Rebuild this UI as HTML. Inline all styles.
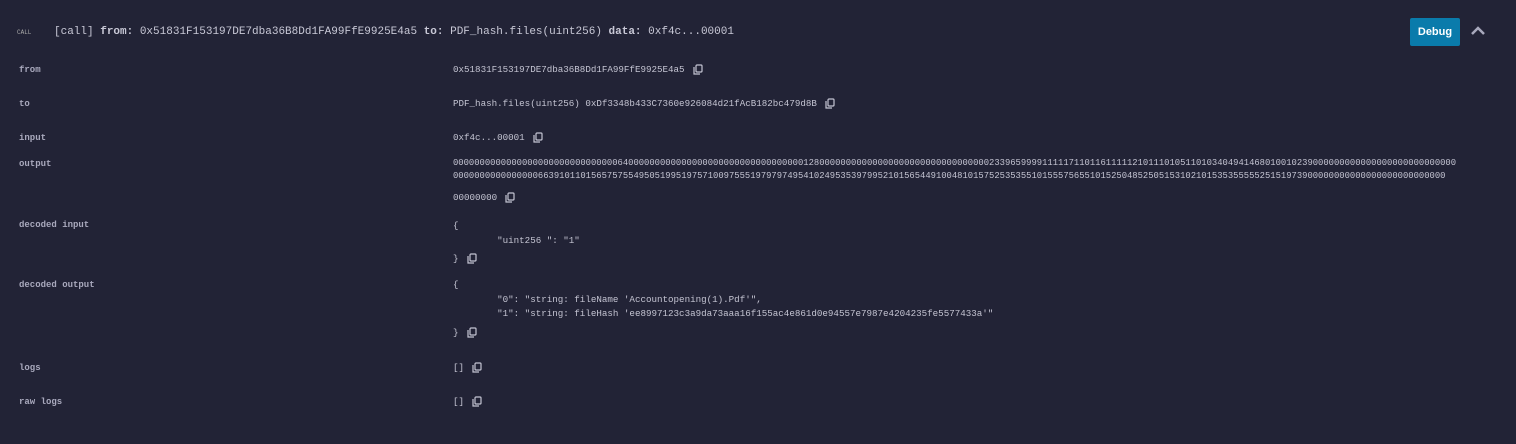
<!DOCTYPE html>
<html><head><meta charset="utf-8"><style>
body{margin:0;width:1516px;height:444px;background:#222336;overflow:hidden;font-family:"Liberation Mono",monospace;color:#c4c4d2;}
.a{position:absolute;white-space:pre;}
.l{position:absolute;left:19px;font-size:9px;font-weight:bold;color:#a9a9bd;}
.v{position:absolute;left:453px;font-size:9.2px;white-space:pre;line-height:13px;}
.c{display:inline-block;width:10px;height:11px;vertical-align:middle;margin-left:8px;}
</style></head><body>
<div class="a" style="left:17px;top:29px;font-size:6px;color:#aaa;">CALL</div>
<div class="a" style="left:54px;top:26px;font-size:11px;color:#c8c8d6;">[call] <b>from:</b> 0x51831F153197DE7dba36B8Dd1FA99FfE9925E4a5 <b>to:</b> PDF_hash.files(uint256) <b>data:</b> 0xf4c...00001</div>
<div class="a" style="left:1410px;top:18px;width:50px;height:28px;background:#0a7bab;border-radius:2px;color:#fff;font-family:'Liberation Sans',sans-serif;font-weight:bold;font-size:11px;text-align:center;line-height:28px;">Debug</div>
<svg class="a" style="left:1470px;top:25px" width="16" height="12"><path d="M2 9 L8 3 L14 9" stroke="#a9a9bd" stroke-width="2.5" fill="none"/></svg>

<div class="l" style="top:65px">from</div>
<div class="v" style="top:63px">0x51831F153197DE7dba36B8Dd1FA99FfE9925E4a5<svg class="c" viewBox="0 0 10 11"><rect x="3" y="1" width="6" height="7" rx="1" fill="none" stroke="#c4c4d2" stroke-width="1.2"/><path d="M1 3v7h6" fill="none" stroke="#c4c4d2" stroke-width="1.2"/></svg></div>
<div class="l" style="top:99px">to</div>
<div class="v" style="top:97px">PDF_hash.files(uint256) 0xDf3348b433C7360e926084d21fAcB182bc479d8B<svg class="c" viewBox="0 0 10 11"><rect x="3" y="1" width="6" height="7" rx="1" fill="none" stroke="#c4c4d2" stroke-width="1.2"/><path d="M1 3v7h6" fill="none" stroke="#c4c4d2" stroke-width="1.2"/></svg></div>
<div class="l" style="top:133px">input</div>
<div class="v" style="top:131px">0xf4c...00001<svg class="c" viewBox="0 0 10 11"><rect x="3" y="1" width="6" height="7" rx="1" fill="none" stroke="#c4c4d2" stroke-width="1.2"/><path d="M1 3v7h6" fill="none" stroke="#c4c4d2" stroke-width="1.2"/></svg></div>
<div class="l" style="top:159px">output</div>
<div class="v" style="top:157px;font-size:8.86px;">000000000000000000000000000000064000000000000000000000000000000000128000000000000000000000000000000002339659999111117110116111112101110105110103404941468010010239000000000000000000000000000
0000000000000000663910110156575755495051995197571009755519797974954102495353979952101565449100481015752535355101555756551015250485250515310210153535555525151973900000000000000000000000000</div>
<div class="v" style="top:191px">00000000<svg class="c" viewBox="0 0 10 11"><rect x="3" y="1" width="6" height="7" rx="1" fill="none" stroke="#c4c4d2" stroke-width="1.2"/><path d="M1 3v7h6" fill="none" stroke="#c4c4d2" stroke-width="1.2"/></svg></div>
<div class="l" style="top:220px">decoded input</div>
<div class="v" style="top:218px;line-height:15px">{
        "uint256 ": "1"
</div>
<div class="v" style="top:252px">}<svg class="c" viewBox="0 0 10 11"><rect x="3" y="1" width="6" height="7" rx="1" fill="none" stroke="#c4c4d2" stroke-width="1.2"/><path d="M1 3v7h6" fill="none" stroke="#c4c4d2" stroke-width="1.2"/></svg></div>
<div class="l" style="top:280px">decoded output</div>
<div class="v" style="top:278px;line-height:14.5px">{
        "0": "string: fileName 'Accountopening(1).Pdf'",
        "1": "string: fileHash 'ee8997123c3a9da73aaa16f155ac4e861d0e94557e7987e4204235fe5577433a'"
</div>
<div class="v" style="top:326px">}<svg class="c" viewBox="0 0 10 11"><rect x="3" y="1" width="6" height="7" rx="1" fill="none" stroke="#c4c4d2" stroke-width="1.2"/><path d="M1 3v7h6" fill="none" stroke="#c4c4d2" stroke-width="1.2"/></svg></div>
<div class="l" style="top:363px">logs</div>
<div class="v" style="top:361px">[]<svg class="c" viewBox="0 0 10 11"><rect x="3" y="1" width="6" height="7" rx="1" fill="none" stroke="#c4c4d2" stroke-width="1.2"/><path d="M1 3v7h6" fill="none" stroke="#c4c4d2" stroke-width="1.2"/></svg></div>
<div class="l" style="top:397px">raw logs</div>
<div class="v" style="top:395px">[]<svg class="c" viewBox="0 0 10 11"><rect x="3" y="1" width="6" height="7" rx="1" fill="none" stroke="#c4c4d2" stroke-width="1.2"/><path d="M1 3v7h6" fill="none" stroke="#c4c4d2" stroke-width="1.2"/></svg></div>
</body></html>
